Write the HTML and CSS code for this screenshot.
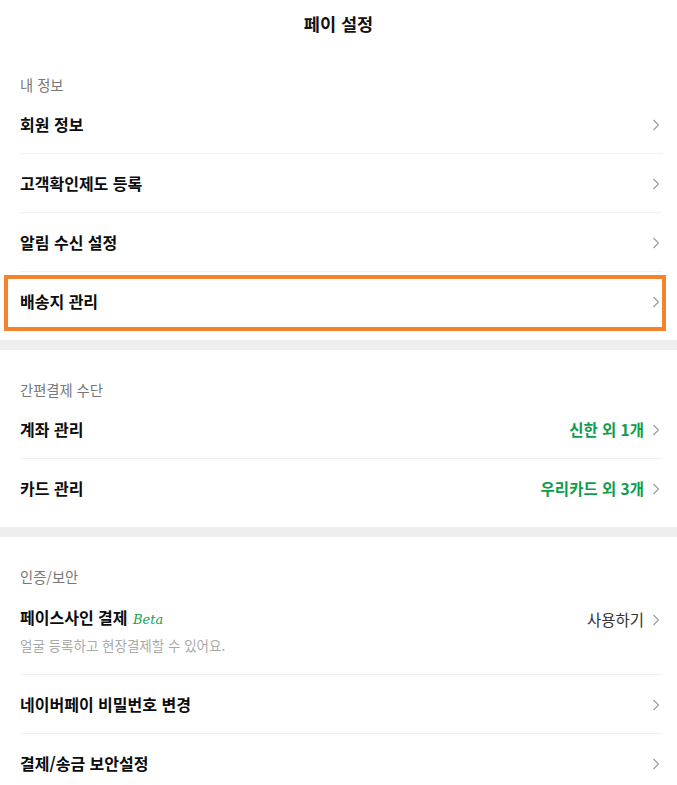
FILE: index.html
```html
<!DOCTYPE html>
<html lang="ko">
<head>
<meta charset="utf-8">
<title>페이 설정</title>
<link rel="stylesheet" href="styles.css">
</head>
<body>
<div class="page">
  <header class="header"><h1 class="title">페이 설정</h1></header>

  <section class="section">
    <h2 class="label">내 정보</h2>
    <ul class="list">
      <li class="row"><span class="name">회원 정보</span><span class="right"><svg class="chev" viewBox="0 0 8 12"><polyline points="1.5,1 6.5,6 1.5,11"/></svg></span></li>
      <li class="row"><span class="name">고객확인제도 등록</span><span class="right"><svg class="chev" viewBox="0 0 8 12"><polyline points="1.5,1 6.5,6 1.5,11"/></svg></span></li>
      <li class="row"><span class="name">알림 수신 설정</span><span class="right"><svg class="chev" viewBox="0 0 8 12"><polyline points="1.5,1 6.5,6 1.5,11"/></svg></span></li>
      <li class="row row-hl"><span class="name">배송지 관리</span><span class="right"><svg class="chev" viewBox="0 0 8 12"><polyline points="1.5,1 6.5,6 1.5,11"/></svg></span></li>
    </ul>
  </section>

  <div class="band"></div>

  <section class="section">
    <h2 class="label">간편결제 수단</h2>
    <ul class="list">
      <li class="row"><span class="name">계좌 관리</span><span class="right"><span class="value">신한 외 1개</span><svg class="chev" viewBox="0 0 8 12"><polyline points="1.5,1 6.5,6 1.5,11"/></svg></span></li>
      <li class="row"><span class="name">카드 관리</span><span class="right"><span class="value">우리카드 외 3개</span><svg class="chev" viewBox="0 0 8 12"><polyline points="1.5,1 6.5,6 1.5,11"/></svg></span></li>
    </ul>
  </section>

  <div class="band"></div>

  <section class="section">
    <h2 class="label">인증/보안</h2>
    <ul class="list">
      <li class="row row-tall">
        <div class="row-top"><span class="name">페이스사인 결제 <em class="beta">Beta</em></span><span class="right"><span class="action">사용하기</span><svg class="chev" viewBox="0 0 8 12"><polyline points="1.5,1 6.5,6 1.5,11"/></svg></span></div>
        <p class="desc">얼굴 등록하고 현장결제할 수 있어요.</p>
      </li>
      <li class="row"><span class="name">네이버페이 비밀번호 변경</span><span class="right"><svg class="chev" viewBox="0 0 8 12"><polyline points="1.5,1 6.5,6 1.5,11"/></svg></span></li>
      <li class="row"><span class="name">결제/송금 보안설정</span><span class="right"><svg class="chev" viewBox="0 0 8 12"><polyline points="1.5,1 6.5,6 1.5,11"/></svg></span></li>
    </ul>
  </section>
</div>
</body>
</html>
```

FILE: styles.css
```css
* { box-sizing: border-box; }
html, body { margin: 0; padding: 0; background: #fff; }
body {
  font-family: "Noto Sans CJK KR", "Noto Sans", sans-serif;
  color: #111;
}
.page { width: 677px; }

.header {
  height: 48px;
  display: flex;
  align-items: center;
  justify-content: center;
}
.title {
  margin: 0;
  font-size: 17.5px;
  font-weight: 700;
  line-height: 22px;
  color: #111;
}

.section {
  padding: 26px 15px 10px 20px;
}
.section + .band + .section { padding-top: 29px; }
.label {
  margin: 0;
  font-size: 14.3px;
  font-weight: 400;
  line-height: 21px;
  color: #777;
}
.list { list-style: none; margin: 0; padding: 0; }
.row {
  position: relative;
  height: 59px;
  display: flex;
  align-items: center;
  justify-content: space-between;
  border-bottom: 1px solid #f0f0f0;
}
.row:last-child { border-bottom: 0; height: 58px; }
.name {
  font-size: 16px;
  font-weight: 700;
  line-height: 22px;
  color: #0c0c0c;
}
.right {
  display: flex;
  align-items: center;
  gap: 8px;
}
.value {
  font-size: 15.5px;
  font-weight: 700;
  color: #0e9d4b;
  line-height: 22px;
}
.action {
  font-size: 15.5px;
  font-weight: 400;
  color: #333;
  line-height: 22px;
}
.chev {
  width: 8px;
  height: 12px;
  margin-right: 2px;
  margin-top: 2px;
  fill: none;
  stroke: #9a9a9a;
  stroke-width: 1.1;
}
.beta {
  font-family: "DejaVu Serif", "Liberation Serif", serif;
  font-style: italic;
  font-weight: 400;
  font-size: 13px;
  color: #17a04f;
  margin-left: 1px;
}
.row-hl::after {
  content: "";
  position: absolute;
  left: -16px;
  right: -4px;
  top: 3px;
  bottom: -1px;
  border: 4px solid #f5832c;
  pointer-events: none;
}
.row-tall {
  height: auto;
  display: block;
  padding: 19px 0 20px;
}
.row-top {
  display: flex;
  align-items: center;
  justify-content: space-between;
}
.desc {
  margin: 5px 0 0;
  font-size: 13.5px;
  line-height: 18px;
  color: #aaa;
}
.band {
  height: 10px;
  background: #eeeeef;
}
```
